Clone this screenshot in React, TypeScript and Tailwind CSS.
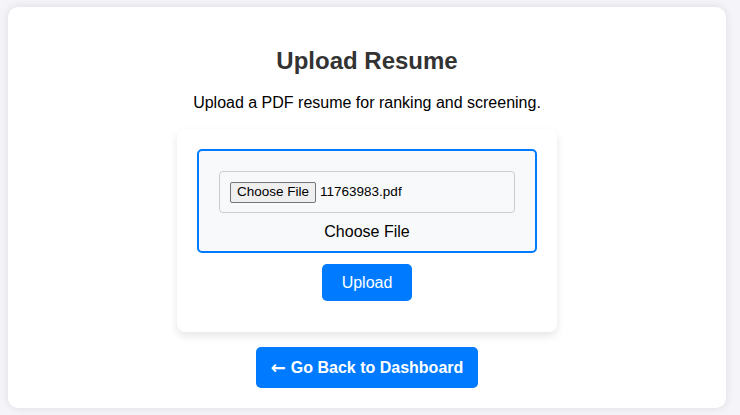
export default function App() {
  return (
    <div
      className="min-h-[415px] w-full bg-[#f4f4f9] pt-[7px] pl-[8px]"
      style={{ fontFamily: '"Liberation Sans", Arial, sans-serif' }}
    >
      <div className="flex h-[401px] w-[718px] flex-col items-center rounded-[10px] bg-white pt-[40px] shadow-[0_0_10px_rgba(0,0,0,0.1)]">
        <h1 className="h-[28px] text-[24px] font-bold leading-[28px] text-[#333]">Upload Resume</h1>
        <p className="mt-[18px] h-[20px] text-[16px] leading-[20px] text-black">
          Upload a PDF resume for ranking and screening.
        </p>

        <div className="mt-[16px] flex h-[203px] w-[380px] flex-col items-center rounded-[8px] bg-white p-[20px] shadow-[0_4px_8px_rgba(0,0,0,0.1)]">
          <div className="flex w-[340px] flex-col items-center rounded-[5px] border-2 border-[#007bff] bg-[#f8f9fa] px-[20px] pt-[20px] pb-[9px]">
            <div className="flex h-[42px] w-[296px] items-center rounded-[4px] border border-[#ccc] px-[10px]">
              <span className="flex h-[21px] items-center rounded-[2px] border border-[#767676] bg-[#efefef] px-[6px] text-[13.5px] leading-none text-black">
                Choose File
              </span>
              <span className="ml-[4px] text-[13.5px] text-black">11763983.pdf</span>
            </div>
            <label className="mt-[9px] h-[20px] text-[16px] leading-[20px] text-black">Choose File</label>
          </div>
          <button className="mt-[11px] h-[37px] rounded-[5px] bg-[#007bff] px-[20px] text-[16px] text-white">
            Upload
          </button>
        </div>

        <button className="mt-[15px] flex h-[41px] w-[222px] items-center justify-center gap-[5px] rounded-[5px] bg-[#007bff] pt-px text-[16px] font-bold text-white">
          <span className="text-[18px] font-bold leading-none" style={{ fontFamily: '"DejaVu Sans", sans-serif' }}>←</span>
          <span>Go Back to Dashboard</span>
        </button>
      </div>
    </div>
  )
}
